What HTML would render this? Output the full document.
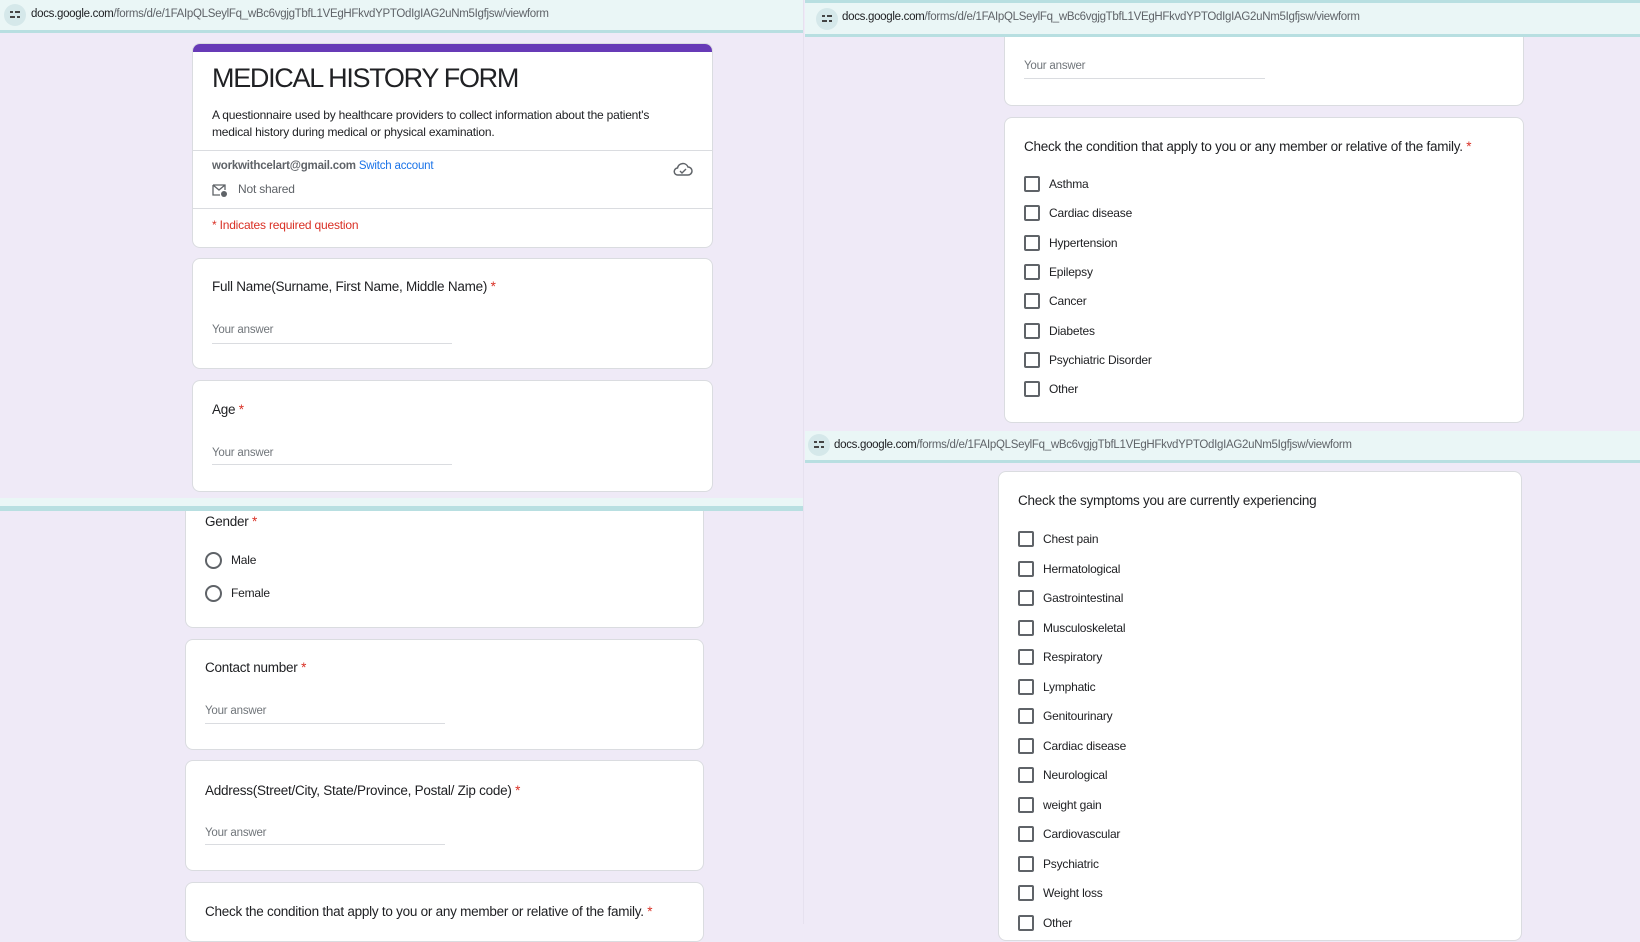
<!DOCTYPE html>
<html><head><meta charset="utf-8"><style>
*{margin:0;padding:0;box-sizing:border-box}
body{width:1640px;height:924px;overflow:hidden;background:#efeaf7;font-family:"Liberation Sans",Arial,sans-serif;color:#202124;position:relative}
.a{position:absolute;white-space:nowrap}
.card{position:absolute;background:#fff;border:1px solid #dadce0;border-radius:8px}
.url{position:absolute;background:#eaf6f6;border-bottom:3px solid #b8dfe1}
.url span{position:absolute;font-size:11.5px;color:#5f6368;letter-spacing:-0.3px}
.url b{font-weight:normal;color:#202124}
.ic{position:absolute;width:22px;height:22px;border-radius:50%;background:#d5e8ea}
.ic:before{content:"";position:absolute;left:6px;top:7px;width:10px;height:2px;background:linear-gradient(90deg,#444 0 3px,transparent 3px 5px,#444 5px)}
.ic:after{content:"";position:absolute;left:6px;top:12px;width:10px;height:2px;background:linear-gradient(90deg,#444 0 5px,transparent 5px 7px,#444 7px)}
.q{font-size:13.5px;color:#202124;letter-spacing:-0.25px}
.r{color:#d93025}
.ans{font-size:11.5px;color:#70757a;letter-spacing:-0.2px}
.ul{position:absolute;height:1px;background:#dadce0}
.cb{position:absolute;width:16px;height:16px;border:2px solid #5f6368;border-radius:2px}
.lb{font-size:12px;color:#202124;letter-spacing:-0.2px}
.rad{position:absolute;width:17px;height:17px;border:2px solid #5f6368;border-radius:50%}
</style></head><body>

<div class="url" style="left:0;top:0;width:803px;height:33px">
<div class="ic" style="left:4px;top:4px"></div>
<span style="left:31px;top:8px"><b>docs.google.com</b>/forms/d/e/1FAIpQLSeylFq_wBc6vgjgTbfL1VEgHFkvdYPTOdIgIAG2uNm5Igfjsw/viewform</span>
</div>

<div class="card" style="left:192px;top:43px;width:521px;height:205px;overflow:hidden">
<div style="position:absolute;left:0;top:0;right:0;height:8px;background:#673ab7"></div>
<div class="a" style="left:19px;top:19px;font-size:27px;letter-spacing:-1.3px">MEDICAL HISTORY FORM</div>
<div class="a" style="left:19px;top:63px;font-size:12px;line-height:16.5px;white-space:normal;width:470px;letter-spacing:-0.2px">A questionnaire used by healthcare providers to collect information about the patient's medical history during medical or physical examination.</div>
<div style="position:absolute;left:0;right:0;top:106px;height:1px;background:#dadce0"></div>
<div class="a" style="left:19px;top:116px;font-size:11.5px;letter-spacing:-0.2px"><b style="color:#5f6368">workwithcelart@gmail.com</b> <span style="color:#1a73e8">Switch account</span></div>
<svg class="a" style="left:480px;top:117px" width="20" height="16" viewBox="0 0 20 16"><path d="M5 14h10a4 4 0 0 0 0-8 5.5 5.5 0 0 0-10.5 1A3.5 3.5 0 0 0 5 14z" fill="none" stroke="#5f6368" stroke-width="1.5"/><path d="M7 10l2 2 4-4" fill="none" stroke="#5f6368" stroke-width="1.4"/></svg>
<svg class="a" style="left:19px;top:139px" width="16" height="15" viewBox="0 0 16 15"><path d="M1 2h12v5M1 2v10h7M1 2l6 5 6-5" fill="none" stroke="#5f6368" stroke-width="1.3"/><circle cx="12" cy="11" r="3" fill="#5f6368"/></svg>
<div class="a" style="left:45px;top:138px;font-size:12px;color:#5f6368;letter-spacing:-0.2px">Not shared</div>
<div style="position:absolute;left:0;right:0;top:164px;height:1px;background:#dadce0"></div>
<div class="a" style="left:19px;top:174px;font-size:12px;color:#d93025;letter-spacing:-0.2px">* Indicates required question</div>
</div>

<div class="card" style="left:192px;top:258px;width:521px;height:111px">
<div class="a q" style="left:19px;top:20px">Full Name(Surname, First Name, Middle Name) <span class="r">*</span></div>
<div class="a ans" style="left:19px;top:65px">Your answer</div>
<div class="ul" style="left:19px;top:84px;width:240px"></div>
</div>

<div class="card" style="left:192px;top:380px;width:521px;height:112px">
<div class="a q" style="left:19px;top:21px">Age <span class="r">*</span></div>
<div class="a ans" style="left:19px;top:66px">Your answer</div>
<div class="ul" style="left:19px;top:83px;width:240px"></div>
</div>

<div style="position:absolute;left:0;top:498px;width:803px;height:9px;background:#eaf6f6"></div>
<div style="position:absolute;left:0;top:506px;width:803px;height:5px;background:#b8dfe1"></div>

<div class="card" style="left:185px;top:511px;width:519px;height:117px;border-top:none;border-radius:0 0 8px 8px">
<div class="a q" style="left:19px;top:3px">Gender <span class="r">*</span></div>
<div class="rad" style="left:19px;top:41px"></div><div class="a lb" style="left:45px;top:42px">Male</div>
<div class="rad" style="left:19px;top:74px"></div><div class="a lb" style="left:45px;top:75px">Female</div>
</div>

<div class="card" style="left:185px;top:639px;width:519px;height:111px">
<div class="a q" style="left:19px;top:20px">Contact number <span class="r">*</span></div>
<div class="a ans" style="left:19px;top:65px">Your answer</div>
<div class="ul" style="left:19px;top:83px;width:240px"></div>
</div>

<div class="card" style="left:185px;top:760px;width:519px;height:111px">
<div class="a q" style="left:19px;top:22px">Address(Street/City, State/Province, Postal/ Zip code) <span class="r">*</span></div>
<div class="a ans" style="left:19px;top:66px">Your answer</div>
<div class="ul" style="left:19px;top:83px;width:240px"></div>
</div>

<div class="card" style="left:185px;top:882px;width:519px;height:60px">
<div class="a q" style="left:19px;top:21px">Check the condition that apply to you or any member or relative of the family. <span class="r">*</span></div>
</div>

<div style="position:absolute;left:803px;top:0;width:1px;height:924px;background:#e6e1ef"></div>
<div class="url" style="left:805px;top:0;width:835px;height:37px;border-top:3px solid #b8dfe1">
<div class="ic" style="left:11px;top:5px"></div>
<span style="left:37px;top:8px"><b>docs.google.com</b>/forms/d/e/1FAIpQLSeylFq_wBc6vgjgTbfL1VEgHFkvdYPTOdIgIAG2uNm5Igfjsw/viewform</span>
</div>

<div class="card" style="left:1004px;top:37px;width:520px;height:69px;border-top:none;border-radius:0 0 8px 8px">
<div class="a ans" style="left:19px;top:23px">Your answer</div>
<div class="ul" style="left:19px;top:41px;width:241px"></div>
</div>

<div class="card" style="left:1004px;top:117px;width:520px;height:306px">
<div class="a q" style="left:19px;top:21px">Check the condition that apply to you or any member or relative of the family. <span class="r">*</span></div>
<div class="cb" style="left:19px;top:58px"></div><div class="a lb" style="left:44px;top:59px">Asthma</div>
<div class="cb" style="left:19px;top:87px"></div><div class="a lb" style="left:44px;top:88px">Cardiac disease</div>
<div class="cb" style="left:19px;top:117px"></div><div class="a lb" style="left:44px;top:118px">Hypertension</div>
<div class="cb" style="left:19px;top:146px"></div><div class="a lb" style="left:44px;top:147px">Epilepsy</div>
<div class="cb" style="left:19px;top:175px"></div><div class="a lb" style="left:44px;top:176px">Cancer</div>
<div class="cb" style="left:19px;top:205px"></div><div class="a lb" style="left:44px;top:206px">Diabetes</div>
<div class="cb" style="left:19px;top:234px"></div><div class="a lb" style="left:44px;top:235px">Psychiatric Disorder</div>
<div class="cb" style="left:19px;top:263px"></div><div class="a lb" style="left:44px;top:264px">Other</div>
</div>

<div class="url" style="left:805px;top:431px;width:835px;height:32px">
<div class="ic" style="left:3px;top:3px"></div>
<span style="left:29px;top:8px"><b>docs.google.com</b>/forms/d/e/1FAIpQLSeylFq_wBc6vgjgTbfL1VEgHFkvdYPTOdIgIAG2uNm5Igfjsw/viewform</span>
</div>

<div class="card" style="left:998px;top:471px;width:524px;height:470px">
<div class="a q" style="left:19px;top:21px">Check the symptoms you are currently experiencing</div>
<div class="cb" style="left:19px;top:59px"></div><div class="a lb" style="left:44px;top:60px">Chest pain</div>
<div class="cb" style="left:19px;top:89px"></div><div class="a lb" style="left:44px;top:90px">Hermatological</div>
<div class="cb" style="left:19px;top:118px"></div><div class="a lb" style="left:44px;top:119px">Gastrointestinal</div>
<div class="cb" style="left:19px;top:148px"></div><div class="a lb" style="left:44px;top:149px">Musculoskeletal</div>
<div class="cb" style="left:19px;top:177px"></div><div class="a lb" style="left:44px;top:178px">Respiratory</div>
<div class="cb" style="left:19px;top:207px"></div><div class="a lb" style="left:44px;top:208px">Lymphatic</div>
<div class="cb" style="left:19px;top:236px"></div><div class="a lb" style="left:44px;top:237px">Genitourinary</div>
<div class="cb" style="left:19px;top:266px"></div><div class="a lb" style="left:44px;top:267px">Cardiac disease</div>
<div class="cb" style="left:19px;top:295px"></div><div class="a lb" style="left:44px;top:296px">Neurological</div>
<div class="cb" style="left:19px;top:325px"></div><div class="a lb" style="left:44px;top:326px">weight gain</div>
<div class="cb" style="left:19px;top:354px"></div><div class="a lb" style="left:44px;top:355px">Cardiovascular</div>
<div class="cb" style="left:19px;top:384px"></div><div class="a lb" style="left:44px;top:385px">Psychiatric</div>
<div class="cb" style="left:19px;top:413px"></div><div class="a lb" style="left:44px;top:414px">Weight loss</div>
<div class="cb" style="left:19px;top:443px"></div><div class="a lb" style="left:44px;top:444px">Other</div>
</div>
</body></html>
